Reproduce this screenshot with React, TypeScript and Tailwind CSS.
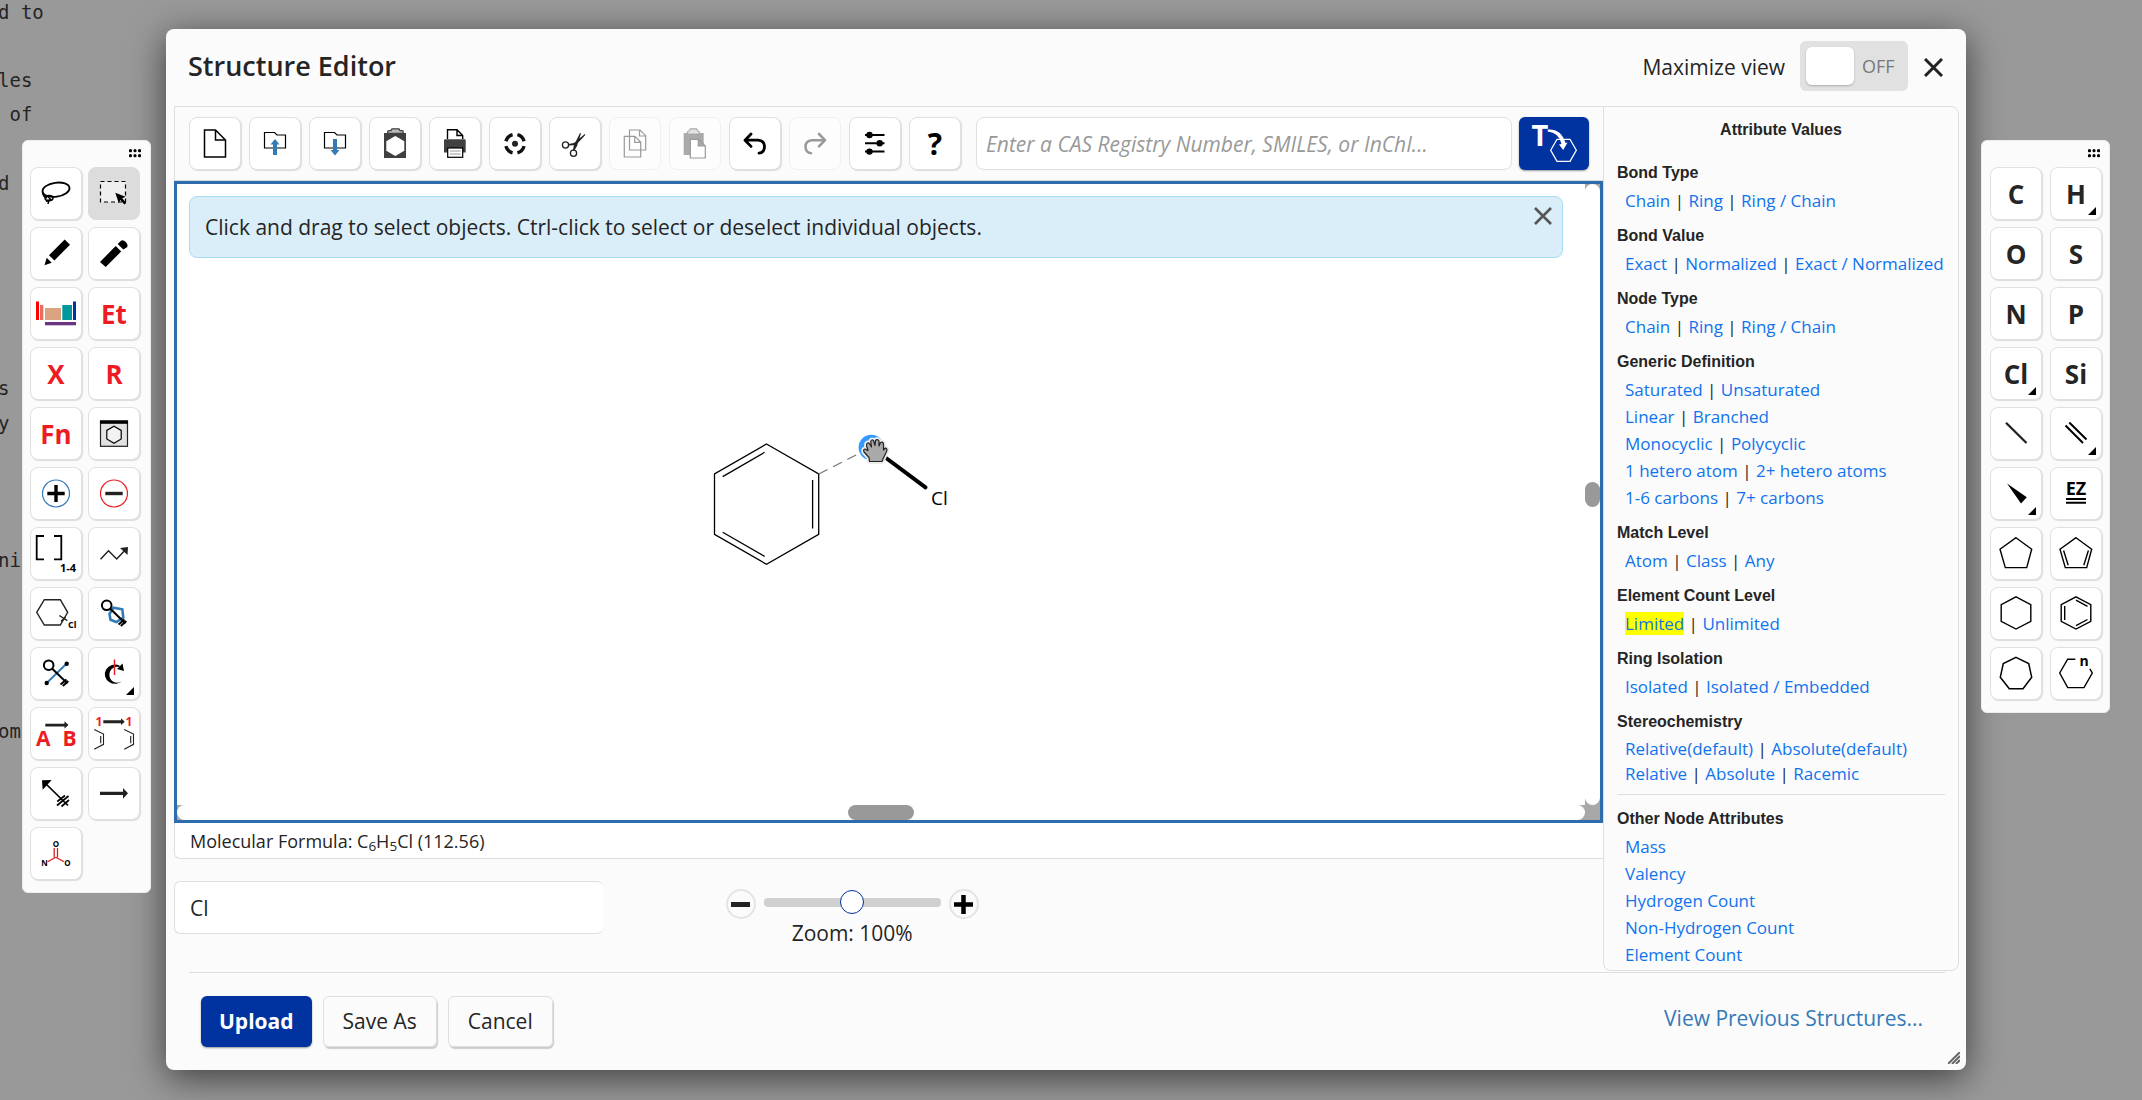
import type { ReactNode } from 'react';

type Tool = {
    label: string;
    icon: ReactNode;
    more?: boolean;
    active?: boolean;
    disabled?: boolean;
};

const RED = '#ed1c24';
const BLUE = '#337ab7';

// All tool icons share the 52x53 button box as their coordinate space
function Icon({ children }: { children: ReactNode }) {
    return (
        <svg viewBox="0 0 52 53" className="h-[53px] w-[52px] shrink-0 font-['Open_Sans',sans-serif]" fill="none" stroke="none" aria-hidden="true">
            {children}
        </svg>
    );
}

function Glyph({ children, red }: { children: string; red?: boolean }) {
    return (
        <span className={`text-[26px] leading-8 font-bold ${red ? 'text-[#ed1c24]' : 'text-[#252525]'}`}>{children}</span>
    );
}

function ToolButton({ tool }: { tool: Tool }) {
    return (
        <button
            type="button"
            aria-label={tool.label}
            disabled={tool.disabled}
            className={`relative flex h-[53px] w-[52px] shrink-0 items-center justify-center rounded-lg border ${tool.active
                ? 'border-[#dcdcdc] bg-[#dcdcdc]'
                : tool.disabled
                    ? 'border-[#f0f0f0] bg-[#fdfdfd]'
                    : 'border-[#e0e0e0] bg-white shadow-[1px_1px_1px_#dcdcdc]'
                }`}
        >
            {tool.icon}
            {tool.more && (
                <svg viewBox="0 0 8 8" className="absolute right-[5px] bottom-1 size-2" aria-hidden="true">
                    <path d="M8 0V8H0z" fill="#000" />
                </svg>
            )}
        </button>
    );
}

const newIcon = (
    <Icon>
        <path d="M15.5 13H26.5L36.5 23V40H15.5z M26.5 13V23H36.5" stroke="#000" strokeWidth="1.5" />
    </Icon>
);

const openIcon = (
    <Icon>
        <path d="M15.5 31V15.5H25.5L28 18H36.5V31z" stroke="#000" strokeWidth="1.2" />
        <path d="M24 38V27.5H21.5L26 22L30.5 27.5H28V38z" fill={BLUE} />
    </Icon>
);

const saveIcon = (
    <Icon>
        <path d="M15.5 31V15.5H25.5L28 18H36.5V31z" stroke="#000" strokeWidth="1.2" />
        <path d="M24 22V33H21.5L26 38.5L30.5 33H28V22z" fill={BLUE} />
    </Icon>
);

const templateIcon = (
    <Icon>
        <rect x="15" y="16" width="22" height="25" fill="#404040" />
        <path d="M26.3 19L35.3 24.3V33.7L26.3 39L17.3 33.7V24.3z" fill="#fff" />
        <path d="M18.7 16.5V14.5Q18.7 13.6 20 13.6H22L23 11.8H30L31 13.6H33Q34.2 13.6 34.2 14.5V16.5z" fill="#bbb" stroke="#404040" strokeWidth="1.3" />
    </Icon>
);

const printIcon = (
    <Icon>
        <path d="M18.5 22V12.8H28L33.7 18.5V22 M28 12.8V18.5H33.7" stroke="#000" strokeWidth="1.4" />
        <path d="M16 22.3H36L36.7 23V35.5H15V23z" fill="#404040" />
        <rect x="18.7" y="31" width="15" height="9.3" fill="#fff" stroke="#000" strokeWidth="1.2" />
        <path d="M21 34H31.5M21 37H31.5" stroke="#999" strokeWidth="1.2" />
    </Icon>
);

const centerIcon = (
    <Icon>
        <circle cx="26" cy="26.7" r="9.4" stroke="#111" strokeWidth="3.4" pathLength="360" strokeDasharray="60 30" transform="rotate(15 26 26.7)" />
        <circle cx="26" cy="26.7" r="3" fill="#222" />
    </Icon>
);

const cutIcon = (
    <Icon>
        <g stroke="#222" strokeWidth="1.3">
            <circle cx="16.5" cy="28" r="3.1" />
            <circle cx="24.5" cy="36.2" r="3.1" />
        </g>
        <path d="M19.3 27L25 26L35.8 17L36.3 18L27 28L20 28.6z M23.8 33.4L25 28L31 16L32 16.6L28 29L25.4 33.6z" fill="#222" />
    </Icon>
);

const copyIcon = (
    <Icon>
        <g stroke="#9a9a9a" strokeWidth="1.2">
            <path d="M20.5 13H31L36.7 18.7V33H20.5z M30.5 13V19H36.7" />
            <path d="M15.3 19.3H26L31.7 25V40H15.3z M25.7 19.3V25.3H31.7" />
        </g>
    </Icon>
);

const pasteIcon = (
    <Icon>
        <rect x="14.7" y="16" width="20" height="22" fill="#aaa" />
        <path d="M18.5 17V15Q18.5 14 20 14L21.5 11.8H27.5L29 14Q30.3 14 30.3 15V17z" fill="#e4e4e4" stroke="#aaa" strokeWidth="1.2" />
        <path d="M21.3 22.3H29.5L36.3 29V41H21.3z M29.3 22.3V29H36.3" fill="#fff" stroke="#9a9a9a" strokeWidth="1.2" />
    </Icon>
);

const undoIcon = (
    <Icon>
        <path d="M22 17L16 23.2L22 29.4M16.5 23.2H29Q35.5 23.6 35.5 29.8Q35.3 35.6 30 36.2" stroke="#000" strokeWidth="2.8" strokeLinecap="round" strokeLinejoin="round" />
    </Icon>
);

const redoIcon = (
    <Icon>
        <path d="M30 17L36 23.2L30 29.4M35.5 23.2H23Q16.5 23.6 16.5 29.8Q16.7 35.6 22 36.2" stroke="#9a9a9a" strokeWidth="2.6" strokeLinecap="round" strokeLinejoin="round" />
    </Icon>
);

const settingsIcon = (
    <Icon>
        <path d="M16 18H35.5M16 26.3H35.5M16 34.6H35.5" stroke="#000" strokeWidth="2" />
        <g fill="#000">
            <circle cx="20.5" cy="18" r="3.2" />
            <circle cx="30.7" cy="26.3" r="3.2" />
            <circle cx="20.5" cy="34.6" r="3.2" />
        </g>
    </Icon>
);

const toolbar: Tool[] = [
    { label: 'New', icon: newIcon },
    { label: 'Open', icon: openIcon },
    { label: 'Save', icon: saveIcon },
    { label: 'Templates', icon: templateIcon },
    { label: 'Print', icon: printIcon },
    { label: 'Center', icon: centerIcon },
    { label: 'Cut', icon: cutIcon },
    { label: 'Copy', icon: copyIcon, disabled: true },
    { label: 'Paste', icon: pasteIcon, disabled: true },
    { label: 'Undo', icon: undoIcon },
    { label: 'Redo', icon: redoIcon, disabled: true },
    { label: 'Preferences', icon: settingsIcon },
    { label: 'Help', icon: <span className="text-3xl leading-8 font-bold text-black">?</span> },
];

const drawTools: Tool[] = [
    {
        label: 'Lasso',
        icon: (
            <Icon>
                <g stroke="#000">
                    <ellipse cx="26" cy="22.7" rx="13.6" ry="7" strokeWidth="1.8" transform="rotate(-8 26 22.7)" />
                    <path d="M12.6 25Q12.6 29.5 17 31" strokeWidth="1.5" />
                    <ellipse cx="19" cy="31" rx="4" ry="2.6" strokeWidth="1.5" />
                    <path d="M16.5 28.5L21.5 33M20.5 31.5Q18.5 33.5 18 37M16 34.5L18.5 33" strokeWidth="1.5" />
                </g>
            </Icon>
        ),
    },
    {
        label: 'Select',
        active: true,
        icon: (
            <Icon>
                <rect x="12.5" y="14.5" width="25" height="20.5" fill="#efefef" stroke="#000" strokeWidth="1.2" strokeDasharray="4 3" />
                <path d="M27.3 25.7L37.6 29.8L34.3 31.3L38.3 36L36.3 37.6L32.3 33L30.8 36.2z" fill="#000" />
            </Icon>
        ),
    },
    {
        label: 'Pencil',
        icon: (
            <Icon>
                <path d="M14.5 38.2L16.7 30.7L21.7 35.7z M19 28.2L34.7 12.5L40 17.7L24.4 33.4z" fill="#000" />
            </Icon>
        ),
    },
    {
        label: 'Eraser',
        icon: (
            <Icon>
                <path d="M12 35L27.7 19L33.2 24.5L17.7 40z M29.7 17L33 13.7Q35 12.3 38 15.2Q40.5 18 39 20.2L35.3 22.4z" fill="#000" />
            </Icon>
        ),
    },
    {
        label: 'Shortcuts',
        icon: (
            <Icon>
                <rect x="6" y="14.5" width="3" height="18.5" fill="#f00" />
                <rect x="10" y="18" width="3.3" height="15" fill="#e96b62" />
                <rect x="15" y="21" width="16" height="12" fill="#daa27e" />
                <rect x="32.3" y="18" width="9.7" height="15" fill="#00979d" />
                <rect x="43" y="14.5" width="3" height="18.5" fill="#0032a0" />
                <rect x="15" y="35" width="31" height="3.3" fill="#6b3483" />
            </Icon>
        ),
    },
    { label: 'Ethyl', icon: <Glyph red>Et</Glyph> },
    { label: 'Variables', icon: <Glyph red>X</Glyph> },
    { label: 'R group', icon: <Glyph red>R</Glyph> },
    { label: 'Function', icon: <Glyph red>Fn</Glyph> },
    {
        label: 'Structure template',
        icon: (
            <Icon>
                <rect x="12.5" y="14" width="27" height="25.3" fill="#e2e2e2" stroke="#222" strokeWidth="1.2" />
                <rect x="12" y="13.5" width="28" height="3.3" fill="#000" />
                <path d="M26 19.2L33.2 23.4V32L26 36.2L18.8 32V23.4z" fill="#f2f2f2" stroke="#000" strokeWidth="1.2" />
            </Icon>
        ),
    },
    {
        label: 'Positive charge',
        icon: (
            <Icon>
                <circle cx="26" cy="26.5" r="13.5" stroke={BLUE} strokeWidth="1.2" />
                <path d="M26 18V35M17.3 26.5H34.7" stroke="#000" strokeWidth="3.4" />
            </Icon>
        ),
    },
    {
        label: 'Negative charge',
        icon: (
            <Icon>
                <circle cx="26" cy="26.5" r="13.5" stroke={RED} strokeWidth="1.2" />
                <path d="M17.3 26.5H34.7" stroke="#222" strokeWidth="3.4" />
            </Icon>
        ),
    },
    {
        label: 'Repeating group',
        icon: (
            <Icon>
                <path d="M14 9H6.7V32.3H14M24 9H31.3V32.3H24" stroke="#000" strokeWidth="1.8" />
                <text x="30" y="44.5" fontSize="11" fontWeight="700" fill="#000">1-4</text>
            </Icon>
        ),
    },
    {
        label: 'Chain',
        icon: (
            <Icon>
                <path d="M12.5 32.3L20.5 23.8L28.7 32L37 23.3" stroke="#222" strokeWidth="1.5" />
                <path d="M32 21L40 20L39.5 28z" fill="#222" />
            </Icon>
        ),
    },
    {
        label: 'Variable attachment',
        icon: (
            <Icon>
                <path d="M6.7 25.3L14.3 12.7H30.3L37.7 25.3L30.3 38H14.3z M29.3 28.5L37.3 33.7M31 34.3L35.7 30" stroke="#222" strokeWidth="1.4" />
                <text x="38" y="40.5" fontSize="9" fontWeight="700" fill="#000">Cl</text>
            </Icon>
        ),
    },
    {
        label: 'Lock ring',
        icon: (
            <Icon>
                <path d="M21.5 27L25.3 20.7L34.3 22.3L35.3 30.5L28.3 35L22.5 32.7z" stroke={BLUE} strokeWidth="2.6" />
                <circle cx="18.7" cy="18.3" r="4.8" stroke="#000" strokeWidth="2" />
                <path d="M22.3 21.8L37.5 36.5M36.5 32.5L30.5 37.5M38.3 34L32.8 39" stroke="#000" strokeWidth="2" />
            </Icon>
        ),
    },
    {
        label: 'Lock bond',
        icon: (
            <Icon>
                <path d="M16.7 36L36.7 16.5" stroke={BLUE} strokeWidth="2" />
                <circle cx="16.7" cy="36" r="2.2" fill="#000" />
                <circle cx="36.7" cy="16.8" r="2.2" fill="#000" />
                <circle cx="18.7" cy="18.2" r="4.8" stroke="#000" strokeWidth="2" />
                <path d="M22.3 21.8L37.5 36.5M36.5 32.5L30.5 37.5M38.3 34L32.8 39" stroke="#000" strokeWidth="2" />
            </Icon>
        ),
    },
    {
        label: 'Rotate',
        more: true,
        icon: (
            <Icon>
                <path d="M31.5 18.5A10.3 9.6 0 1 0 35.3 33A8 8 0 1 1 31.5 20z" fill="#000" />
                <path d="M29 22L36 24L34.5 16.5z" fill="#000" />
                <path d="M26.5 12.5V28" stroke={RED} strokeWidth="1.5" />
            </Icon>
        ),
    },
    {
        label: 'Reaction role',
        icon: (
            <Icon>
                <path d="M15.3 16.7H34.5V14.2L38.5 18L34.5 21.5V19.5H15.3z" fill="#222" />
                <text x="6" y="38.5" fontSize="21" fontWeight="700" fill={RED}>A</text>
                <text x="32.5" y="38.5" fontSize="21" fontWeight="700" fill={RED}>B</text>
            </Icon>
        ),
    },
    {
        label: 'Atom mapping',
        icon: (
            <Icon>
                <path d="M15.3 13.3H33V11.3L36.8 14.7L33 18V16.2H15.3z" fill="#222" />
                <text x="7.5" y="18.5" fontSize="12" fontWeight="700" fill={RED}>1</text>
                <text x="37.5" y="18.5" fontSize="12" fontWeight="700" fill={RED}>1</text>
                <path d="M6.2 22.5L15.5 27V37.3L6.2 42.3M12.7 29V36.3M36.2 22.5L45.5 27V37.3L36.2 42.3M42.7 29V36.3" stroke="#222" strokeWidth="1.1" />
            </Icon>
        ),
    },
    {
        label: 'Reaction site',
        icon: (
            <Icon>
                <path d="M12 13.3L21.7 13L12.7 22.7z" fill="#000" />
                <path d="M15 16L38 38.5M27.3 34.5L35 28.5M31.5 39.5L39 33M27 38.5L38.5 29" stroke="#000" strokeWidth="1.7" />
            </Icon>
        ),
    },
    {
        label: 'Reaction arrow',
        icon: (
            <Icon>
                <path d="M12 24.8H35V21L40 26.3L35 31.8V28H12z" fill="#222" />
            </Icon>
        ),
    },
    {
        label: 'Clean structure',
        icon: (
            <Icon>
                <path d="M24.2 21V30.3M27.5 21V30.3M25.8 30.3L17.7 34.7M25.8 30.3L34 34.7" stroke="#d8201f" strokeWidth="1.3" />
                <g fontSize="8" fontWeight="700" fill="#000" textAnchor="middle">
                    <text x="26" y="19.7">O</text>
                    <text x="14.5" y="39">N</text>
                    <text x="37.5" y="39">O</text>
                </g>
            </Icon>
        ),
    },
];

const pentagon = 'M26 10.7L41.7 22.2L36.7 40.6H15.3L10 22.2z';
const hexagon = 'M26 9.8L40.8 17.6V34.4L26 42L11.2 34.4V17.6z';

const atomTools: Tool[] = [
    { label: 'Carbon', icon: <Glyph>C</Glyph> },
    { label: 'Hydrogen', icon: <Glyph>H</Glyph>, more: true },
    { label: 'Oxygen', icon: <Glyph>O</Glyph> },
    { label: 'Sulfur', icon: <Glyph>S</Glyph> },
    { label: 'Nitrogen', icon: <Glyph>N</Glyph> },
    { label: 'Phosphorus', icon: <Glyph>P</Glyph> },
    { label: 'Chlorine', icon: <Glyph>Cl</Glyph>, more: true },
    { label: 'Silicon', icon: <Glyph>Si</Glyph> },
    { label: 'Single bond', icon: <Icon><path d="M16 15.7L36.5 36" stroke="#222" strokeWidth="2.3" /></Icon> },
    { label: 'Double bond', more: true, icon: <Icon><path d="M15.5 18.5L33 36M19.3 15.5L36.5 32.5" stroke="#000" strokeWidth="2" /></Icon> },
    { label: 'Stereo bond', more: true, icon: <Icon><path d="M17 16.5L36.8 30.2L31 36.6z" fill="#000" /></Icon> },
    {
        label: 'Double bond geometry',
        icon: (
            <Icon>
                <text x="26" y="28.3" fontSize="18" fontWeight="700" fill="#000" textAnchor="middle">EZ</text>
                <path d="M16 32H36M16 35.8H36" stroke="#000" strokeWidth="2" />
            </Icon>
        ),
    },
    { label: 'Cyclopentane', icon: <Icon><path d={pentagon} stroke="#000" strokeWidth="1.4" /></Icon> },
    { label: 'Cyclopentadiene', icon: <Icon><path d={`${pentagon}M13.6 23.5L18.2 38.3M38.4 23.5L33.8 38.3`} stroke="#000" strokeWidth="1.4" /></Icon> },
    { label: 'Cyclohexane', icon: <Icon><path d={hexagon} stroke="#000" strokeWidth="1.4" /></Icon> },
    { label: 'Benzene', icon: <Icon><path d={`${hexagon}M14.7 19V33M26 13.2L37.5 19.3M26 38.6L37.5 32.5`} stroke="#000" strokeWidth="1.4" /></Icon> },
    { label: 'Cycloheptane', icon: <Icon><path d="M26 10.3L38.7 16.5L41.7 30.2L33 41.7H19.3L10.3 30.2L13.3 16.5z" stroke="#000" strokeWidth="1.5" /></Icon> },
    {
        label: 'Ring of size n',
        icon: (
            <Icon>
                <path d="M25.3 12.2H17.7L9.7 26L17.7 40.6H34L42.3 26L39.8 21.8" stroke="#000" strokeWidth="1.4" />
                <text x="29.5" y="18.5" fontSize="14" fontWeight="700" fill="#000">n</text>
            </Icon>
        ),
    },
];

type AttributeGroup = { title: string; rows: string[][]; tight?: boolean };

const attributeGroups: AttributeGroup[] = [
    { title: 'Bond Type', rows: [['Chain', 'Ring', 'Ring / Chain']] },
    { title: 'Bond Value', rows: [['Exact', 'Normalized', 'Exact / Normalized']] },
    { title: 'Node Type', rows: [['Chain', 'Ring', 'Ring / Chain']] },
    {
        title: 'Generic Definition',
        rows: [
            ['Saturated', 'Unsaturated'],
            ['Linear', 'Branched'],
            ['Monocyclic', 'Polycyclic'],
            ['1 hetero atom', '2+ hetero atoms'],
            ['1-6 carbons', '7+ carbons'],
        ],
    },
    { title: 'Match Level', rows: [['Atom', 'Class', 'Any']] },
    { title: 'Element Count Level', rows: [['Limited', 'Unlimited']] },
    { title: 'Ring Isolation', rows: [['Isolated', 'Isolated / Embedded']] },
    {
        title: 'Stereochemistry',
        tight: true,
        rows: [
            ['Relative(default)', 'Absolute(default)'],
            ['Relative', 'Absolute', 'Racemic'],
        ],
    },
];

const nodeAttributes = ['Mass', 'Valency', 'Hydrogen Count', 'Non-Hydrogen Count', 'Element Count'];

// Page copy that shows through behind the dialog, one entry per line
const pageLines = [
    ['d to', '', 'les', ' of'],
    ['', 'd', '', ''],
    ['', '', '', 's'],
    ['y', '', '', ''],
    ['ni', '', '', ''],
    ['', 'om'],
];

function Palette({ tools, label, wide }: { tools: Tool[]; label: string; wide?: boolean }) {
    return (
        <aside aria-label={label} className="relative z-10 mt-[140px] w-[129px] shrink-0 rounded-md border border-[#ececec] bg-[#fbfbfb] pb-3">
            <div className="flex h-[26px] items-start justify-end pt-2 pr-[9px]">
                <svg viewBox="0 0 12 9" className="h-[9px] w-3" fill="#000" aria-hidden="true">
                    {[1.5, 6, 10.5].map((x) => [1.7, 6.7].map((y) => <circle key={`${x}-${y}`} cx={x} cy={y} r="1.6" />))}
                </svg>
            </div>
            <div className={`grid grid-cols-[52px_52px] gap-y-[7px] ${wide ? 'gap-x-2 pl-2' : 'gap-x-[6px] pl-[7px]'}`}>
                {tools.map((tool) => <ToolButton key={tool.label} tool={tool} />)}
            </div>
        </aside>
    );
}

function AttributeRow({ items, tight }: { items: string[]; tight?: boolean }) {
    return (
        <div className={`pl-2 text-[17px] whitespace-pre ${tight ? 'leading-[25px]' : 'leading-[27px]'}`}>
            {items.map((item, i) => (
                <span key={item}>
                    {i > 0 && ' | '}
                    <a href="#" className={`text-[#0f73ee] ${item === 'Limited' ? 'bg-[#ffff00]' : ''}`}>{item}</a>
                </span>
            ))}
        </div>
    );
}

function AttributePanel() {
    return (
        <section className="w-[356px] shrink-0 rounded-r-lg rounded-bl-lg border border-[#dedede] px-[13px] pb-[2px]">
            <h2 className="mt-[9px] mb-4 text-center font-['Liberation_Sans',Arial,sans-serif] text-base leading-[27px] font-bold">Attribute Values</h2>
            {attributeGroups.map((group) => (
                <div key={group.title} className="mb-2">
                    <h3 className="font-['Liberation_Sans',Arial,sans-serif] text-base leading-7 font-bold">{group.title}</h3>
                    {group.rows.map((row) => <AttributeRow key={row.join()} items={row} tight={group.tight} />)}
                </div>
            ))}
            <div className="mt-[5px] border-t border-[#dedede] pt-[10px]">
                <h3 className="font-['Liberation_Sans',Arial,sans-serif] text-base leading-7 font-bold">Other Node Attributes</h3>
                {nodeAttributes.map((item) => <AttributeRow key={item} items={[item]} />)}
            </div>
        </section>
    );
}

const hand = 'M869.5 461.5L869 457.5L864 452Q863 449.5 865 449L868 450.5L866.5 445.5Q866.5 442.5 869 443L871.5 447L870.7 441.5Q871.5 439 873.5 440.5L875 445.5L875.5 440.5Q877.5 438.5 879 441L879 446L880.5 442.5Q883 441.5 883.5 444L883.5 450L885.3 448Q887.3 448 886.8 451L883 459L882 461.5z';

function Molecule() {
    return (
        <svg viewBox="700 430 260 150" className="absolute top-[246px] left-[523px] h-[150px] w-[260px]" fill="none" role="img" aria-label="Structure drawing">
            <path d="M766.5 444L818.7 474V534.3L766.5 564.3L714.5 534.3V474z" stroke="#000" strokeWidth="1.3" />
            <path d="M722.7 476.6L764.6 452.3M812.6 480V528.4M722.7 532.2L764.6 556.4" stroke="#000" strokeWidth="1.3" />
            <path d="M818.7 474L860 453" stroke="#777" strokeWidth="1.3" strokeDasharray="10 6" />
            <path d="M882 455L925.5 487.3" stroke="#000" strokeWidth="4" strokeLinecap="round" />
            <text x="931" y="505" fontSize="19" fill="#000" className="font-['Open_Sans',sans-serif]">Cl</text>
            <circle cx="871.3" cy="447.5" r="12.7" fill="#3399ff" />
            {/* Grab cursor over the selected atom */}
            <path d={hand} fill="#fff" stroke="#ececec" strokeWidth="5" strokeLinejoin="round" />
            <path d={hand} fill="#a9a9a9" stroke="#222" strokeWidth="1.2" strokeLinejoin="round" />
        </svg>
    );
}

function Canvas() {
    return (
        <div className="flex h-[642px] flex-col border-3 border-[#2e6dac] bg-white">
            <div className="flex min-h-0 flex-1">
                <div className="relative flex-1 p-3">
                    <div className="mr-[10px] flex items-start rounded-lg border border-[#a8dcf2] bg-[#d9eef9] py-4 pr-[10px] pl-[15px]">
                        <p className="flex-1 text-[21px] leading-7">Click and drag to select objects. Ctrl-click to select or deselect individual objects.</p>
                        <button type="button" aria-label="Dismiss" className="-mt-[6px]">
                            <svg viewBox="0 0 18 18" className="size-[18px]" stroke="#555" strokeWidth="2.6" aria-hidden="true">
                                <path d="M1 1L17 17M17 1L1 17" />
                            </svg>
                        </button>
                    </div>
                    <Molecule />
                </div>
                <div className="flex w-[15px] bg-[#a8a8a8]">
                    <div className="flex w-full items-center rounded-lg bg-white">
                        <div className="h-[25px] w-full rounded-lg bg-[#999]" />
                    </div>
                </div>
            </div>
            <div className="flex h-[15px] bg-[#a8a8a8] pr-[15px]">
                <div className="flex w-full justify-center rounded-lg bg-white">
                    <div className="h-full w-[66px] rounded-lg bg-[#999]" />
                </div>
            </div>
        </div>
    );
}

function ZoomControl() {
    return (
        <div className="mt-2 flex flex-col items-center">
            <div className="flex items-center gap-2">
                <button type="button" aria-label="Zoom out" className="flex size-[30px] items-center justify-center rounded-full border-2 border-[#e4e4e4]">
                    <span className="h-[5px] w-[19px] bg-[#222]" />
                </button>
                <input
                    id="zoom"
                    type="range"
                    min={0}
                    max={200}
                    defaultValue={100}
                    className="-mt-1 h-[9px] w-[177px] appearance-none rounded bg-[#d0d0d0] [&::-webkit-slider-thumb]:size-6 [&::-webkit-slider-thumb]:appearance-none [&::-webkit-slider-thumb]:rounded-full [&::-webkit-slider-thumb]:border [&::-webkit-slider-thumb]:border-[#0032a0] [&::-webkit-slider-thumb]:bg-white"
                />
                <button type="button" aria-label="Zoom in" className="flex size-[30px] items-center justify-center rounded-full border-2 border-[#e4e4e4]">
                    <svg viewBox="0 0 19 19" className="size-[19px]" stroke="#000" strokeWidth="4.5" aria-hidden="true">
                        <path d="M9.5 0V19M0 9.5H19" />
                    </svg>
                </button>
            </div>
            <label htmlFor="zoom" className="text-[21px] leading-7">Zoom: 100%</label>
        </div>
    );
}

export default function App() {
    return (
        <div className="relative flex min-h-screen items-start gap-[15px] overflow-hidden bg-[#999] pr-8 pl-[22px] font-['Open_Sans',sans-serif] text-[#252525]">
            <div className="absolute top-[-5px] left-[-2px] flex flex-col gap-px font-['DejaVu_Sans_Mono',monospace] text-[19px] leading-[34px] whitespace-pre">
                {pageLines.map((block, i) => (
                    <p key={i}>{block.map((line) => `${line}\n`)}</p>
                ))}
            </div>

            <Palette tools={drawTools} label="Drawing tools" />

            <main className="relative mt-[29px] min-w-0 flex-1 rounded-lg bg-[#fbfbfb] pr-[7px] pl-2 shadow-[0_8px_36px_rgba(0,0,0,0.6)]">
                {/* Title bar */}
                <header className="flex h-[77px] items-center pr-4 pl-[14px]">
                    <h1 className="flex-1 pb-1 text-[27px] leading-8 font-semibold">Structure Editor</h1>
                    <span id="maximize" className="mr-[15px] text-[21px]">Maximize view</span>
                    <button
                        type="button"
                        role="switch"
                        aria-checked="false"
                        aria-labelledby="maximize"
                        className="mt-[-3px] flex h-[50px] w-[108px] items-center gap-2 rounded-md bg-[#e1e1e1] px-[6px] text-lg text-[#777]"
                    >
                        <span className="h-[38px] w-12 rounded-md bg-white shadow-[0_1px_2px_#aaa]" />
                        OFF
                    </button>
                    <button type="button" aria-label="Close" className="ml-4">
                        <svg viewBox="0 0 19 19" className="size-[19px]" stroke="#222" strokeWidth="3" aria-hidden="true">
                            <path d="M1 1L18 18M18 1L1 18" />
                        </svg>
                    </button>
                </header>

                <div className="flex">
                    <div className="min-w-0 flex-1">
                        <div className="flex h-[75px] items-center border border-r-0 border-[#dedede] px-[14px]">
                            <div className="flex gap-2">
                                {toolbar.map((tool) => <ToolButton key={tool.label} tool={tool} />)}
                            </div>
                            <input
                                type="text"
                                aria-label="Structure search"
                                placeholder="Enter a CAS Registry Number, SMILES, or InChI..."
                                className="mr-[7px] ml-[15px] h-[53px] min-w-0 flex-1 rounded-lg border border-[#e0e0e0] bg-white px-[9px] text-[21px] placeholder:text-[#999] placeholder:italic"
                            />
                            <button type="button" aria-label="Convert text to structure" className="h-[53px] w-[70px] shrink-0 rounded-md bg-[#0032a0] shadow-[0_1px_2px_#999]">
                                <svg viewBox="0 0 70 53" className="font-['Open_Sans',sans-serif]" fill="none" stroke="#fff" aria-hidden="true">
                                    <text x="12.5" y="28.5" fontSize="29" fontWeight="700" fill="#fff" stroke="none">T</text>
                                    <path d="M28.7 12.6Q42 11.5 46.5 26L48.5 25.5L44.2 33L40 27.5L42.5 27Q40 15.5 28.7 14.5z" fill="#fff" stroke="none" />
                                    <path d="M38 22.3H51L57.3 33.3L51 44.3H38L31.7 33.3z" strokeWidth="1.3" />
                                </svg>
                            </button>
                        </div>

                        <Canvas />

                        <div className="h-9 rounded-bl-md border-b border-l border-[#dedede] bg-white pl-[15px] text-lg leading-9">
                            Molecular Formula: C<sub>6</sub>H<sub>5</sub>Cl (112.56)
                        </div>

                        <div className="mt-[22px] flex items-start gap-[123px]">
                            <input
                                type="text"
                                aria-label="Atom"
                                defaultValue="Cl"
                                className="h-[53px] w-[30%] rounded-md border border-r-0 border-[#dedede] bg-white px-[15px] text-[21px]"
                            />
                            <ZoomControl />
                        </div>
                    </div>

                    <AttributePanel />
                </div>

                {/* Footer */}
                <footer className="mt-px mr-[14px] ml-[15px] flex h-[98px] items-start gap-[11px] border-t border-[#dedede] px-3 pt-[23px] text-[21px]">
                    <button type="button" className="h-[51px] rounded-md bg-[#0032a0] px-[18px] font-bold text-white shadow-[0_1px_2px_#999]">Upload</button>
                    <button type="button" className="h-[51px] rounded-md border border-[#dedede] px-[19px] shadow-[1px_2px_1px_#ccc]">Save As</button>
                    <button type="button" className="h-[51px] rounded-md border border-[#dedede] px-[19px] shadow-[1px_2px_1px_#ccc]">Cancel</button>
                    <a href="#" className="mt-[7px] mr-[10px] ml-auto text-[#337ab7]">View Previous Structures...</a>
                </footer>

                <svg viewBox="0 0 12 12" className="absolute right-[6px] bottom-[6px] size-3" stroke="#666" strokeWidth="2" aria-hidden="true">
                    <path d="M0 12L12 0M4 12L12 4M8 12L12 8" />
                </svg>
            </main>

            <Palette tools={atomTools} label="Atoms and bonds" wide />
        </div>
    );
}
